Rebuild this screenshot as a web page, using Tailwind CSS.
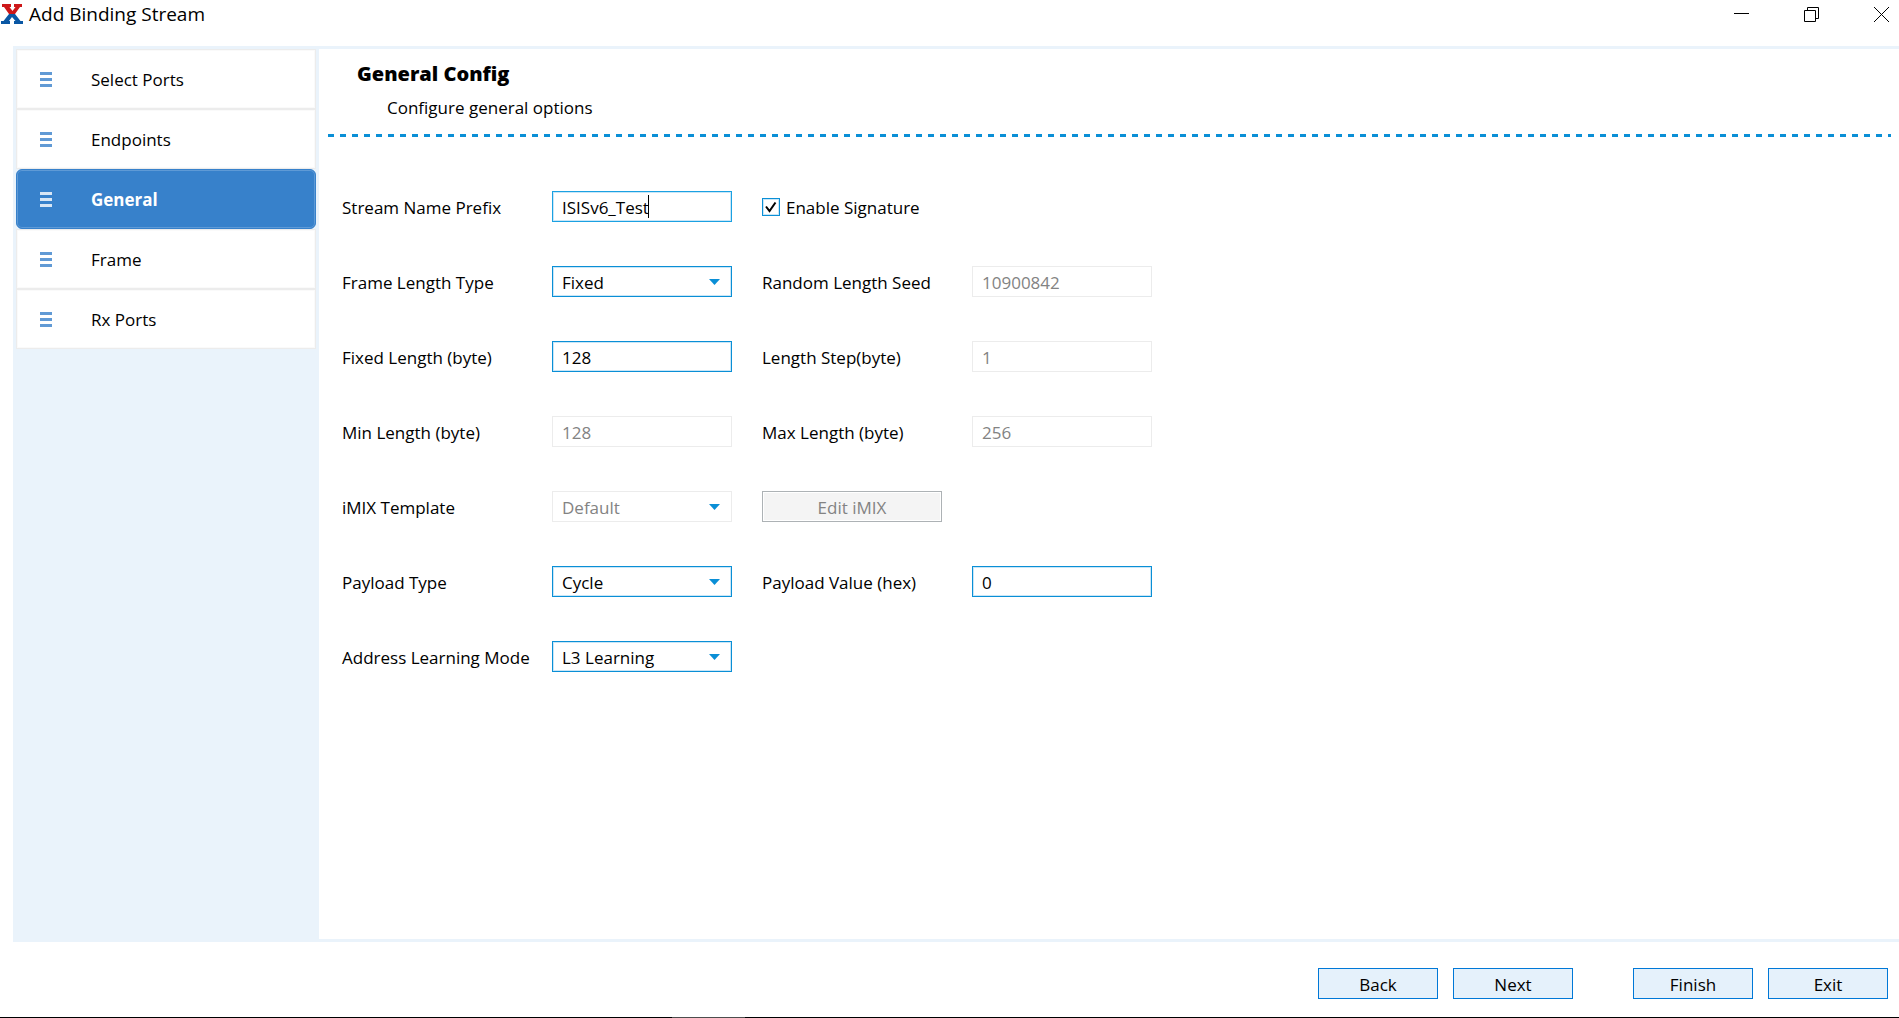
<!DOCTYPE html>
<html lang="en">
<head>
<meta charset="utf-8">
<title>Add Binding Stream</title>
<script src="https://cdn.jsdelivr.net/npm/@tailwindcss/browser@4"></script>
</head>
<body class="flex min-h-screen flex-col bg-white font-['Segoe_UI','Open_Sans',sans-serif] text-[17px] leading-6 text-black">
  <header class="flex h-[46px] items-start justify-between">
    <div class="flex h-7 items-center gap-[6px] pl-px">
      <svg class="h-5 w-[22px]" viewBox="0 0 22 20" aria-hidden="true">
        <path fill="#cd1719" d="M1 0h9v3H8.500l3 4 3-4H13V0h8v3h-2l-5 7H8L3 3H1z"/>
        <path fill="#0a57a4" d="M8 10h6l5.500 7H22v3h-9v-3h1.500l-3.500-4-3 4H9v3H0v-3h2.500z"/>
      </svg>
      <h1 class="text-[19px]">Add Binding Stream</h1>
    </div>
    <div class="flex h-7 items-center gap-[55px] pr-[10px]">
      <button type="button" aria-label="Minimize"><svg class="block size-[15px]" viewBox="0 0 15 15"><path d="M0 6.500h15" stroke="#000"/></svg></button>
      <button type="button" aria-label="Restore"><svg class="block size-[15px]" viewBox="0 0 15 15" fill="none" stroke="#000"><path d="M.5 3.500h11v11H.5zM3.500 3V.5h11v11H12"/></svg></button>
      <button type="button" aria-label="Close"><svg class="block size-[15px]" viewBox="0 0 15 15"><path d="M0 0l15 15M15 0L0 15" stroke="#000"/></svg></button>
    </div>
  </header>

  <div class="ml-[13px] flex flex-1 border-y-[3px] border-[#eaf3fb]">
    <nav class="w-[306px] shrink-0 bg-[#eaf3fb] px-[3px]" aria-label="Steps">
      <ul class="w-[300px] [&_span]:pt-[2px]">
        <li><a href="#ports" class="flex h-[60px] items-center gap-[39px] border border-[#ececec] bg-white pl-[23px] inset-ring inset-ring-[#fafafa]"><svg class="h-[15px] w-3 text-[#619ad5]" viewBox="0 0 12 15" fill="currentColor"><path d="M0 0h12v3H0zM0 6h12v3H0zM0 12h12v3H0z"/></svg><span>Select Ports</span></a></li>
        <li><a href="#endpoints" class="flex h-[60px] items-center gap-[39px] border border-[#ececec] bg-white pl-[23px] inset-ring inset-ring-[#fafafa]"><svg class="h-[15px] w-3 text-[#619ad5]" viewBox="0 0 12 15" fill="currentColor"><path d="M0 0h12v3H0zM0 6h12v3H0zM0 12h12v3H0z"/></svg><span>Endpoints</span></a></li>
        <li><a href="#general" aria-current="step" class="flex h-[60px] items-center gap-[39px] rounded-md border border-[#3781cb] bg-[#3781cb] pl-[23px] font-bold text-white inset-ring inset-ring-[#5e9ad6]"><svg class="h-[15px] w-3 text-[#d7e6f5]" viewBox="0 0 12 15" fill="currentColor"><path d="M0 0h12v3H0zM0 6h12v3H0zM0 12h12v3H0z"/></svg><span>General</span></a></li>
        <li><a href="#frame" class="flex h-[60px] items-center gap-[39px] border border-[#ececec] bg-white pl-[23px] inset-ring inset-ring-[#fafafa]"><svg class="h-[15px] w-3 text-[#619ad5]" viewBox="0 0 12 15" fill="currentColor"><path d="M0 0h12v3H0zM0 6h12v3H0zM0 12h12v3H0z"/></svg><span>Frame</span></a></li>
        <li><a href="#rx" class="flex h-[60px] items-center gap-[39px] border border-[#ececec] bg-white pl-[23px] inset-ring inset-ring-[#fafafa]"><svg class="h-[15px] w-3 text-[#619ad5]" viewBox="0 0 12 15" fill="currentColor"><path d="M0 0h12v3H0zM0 6h12v3H0zM0 12h12v3H0z"/></svg><span>Rx Ports</span></a></li>
      </ul>
    </nav>

    <main class="min-w-0 flex-1 pt-[13px] pr-2 pl-[9px]">
      <h2 class="pl-[29px] text-[20px] font-extrabold">General Config</h2>
      <p class="mt-[10px] pl-[59px]">Configure general options</p>
      <div class="mt-[14px] h-[3px] bg-[repeating-linear-gradient(90deg,#0a8fd6_0_6px,transparent_6px_12px)]"></div>

      <form class="mt-[54px] ml-[14px] grid grid-cols-[210px_180px_30px_210px_180px] items-center gap-y-11 [&_select]:pt-[2px] [&>input]:pt-[2px] [&>label]:pt-[2px]">
        <label for="prefix">Stream Name Prefix</label>
        <div class="relative">
          <input id="prefix" value="ISISv6_Test" class="h-[31px] w-full border border-[#1ba1e2] bg-white pt-[2px] pl-[9px] inset-ring inset-ring-[#c9e6f7] outline-none">
          <span class="absolute top-1 left-[96px] h-[23px] w-px bg-black"></span>
        </div>
        <div class="col-span-2 col-start-4 flex items-center gap-[6px]">
          <span class="relative size-[18px]">
            <input id="signature" type="checkbox" checked class="block size-[18px] appearance-none border border-[#0a8fd6] bg-white inset-ring inset-ring-[#c9e6f7]">
            <svg class="pointer-events-none absolute top-0 left-0 size-[18px]" viewBox="0 0 18 18" fill="none" stroke="#000" stroke-width="2"><path d="M4 8.500l3.500 4.500 6-8.500"/></svg>
          </span>
          <label for="signature" class="pt-[2px]">Enable Signature</label>
        </div>

        <label for="ltype">Frame Length Type</label>
        <div class="relative">
          <select id="ltype" class="h-[31px] w-full appearance-none border border-[#0a8fd6] bg-white pl-[9px] inset-ring inset-ring-[#c9e6f7]"><option>Fixed</option></select>
          <svg class="pointer-events-none absolute top-[13px] right-3 h-[6px] w-[11px]" viewBox="0 0 11 6"><path fill="#0a8fd6" d="M0 0h11L5.500 6z"/></svg>
        </div>
        <label for="seed" class="col-start-4">Random Length Seed</label>
        <input id="seed" disabled value="10900842" class="h-[31px] w-full border border-[#ececec] bg-white pl-[9px] text-[#838383]">

        <label for="fixed">Fixed Length (byte)</label>
        <input id="fixed" value="128" class="h-[31px] w-full border border-[#0a8fd6] bg-white pl-[9px] inset-ring inset-ring-[#c9e6f7]">
        <label for="step" class="col-start-4">Length Step(byte)</label>
        <input id="step" disabled value="1" class="h-[31px] w-full border border-[#ececec] bg-white pl-[9px] text-[#838383]">

        <label for="min">Min Length (byte)</label>
        <input id="min" disabled value="128" class="h-[31px] w-full border border-[#ececec] bg-white pl-[9px] text-[#838383]">
        <label for="max" class="col-start-4">Max Length (byte)</label>
        <input id="max" disabled value="256" class="h-[31px] w-full border border-[#ececec] bg-white pl-[9px] text-[#838383]">

        <label for="imix">iMIX Template</label>
        <div class="relative">
          <select id="imix" disabled class="h-[31px] w-full appearance-none border border-[#ececec] bg-white pl-[9px] text-[#838383] opacity-100"><option>Default</option></select>
          <svg class="pointer-events-none absolute top-[13px] right-3 h-[6px] w-[11px]" viewBox="0 0 11 6"><path fill="#0a8fd6" d="M0 0h11L5.500 6z"/></svg>
        </div>
        <button type="button" disabled class="col-start-4 h-[31px] w-[180px] border border-[#adb2b5] bg-[#f4f4f4] pt-[2px] text-[#838383] inset-ring inset-ring-white">Edit iMIX</button>

        <label for="ptype" class="col-start-1">Payload Type</label>
        <div class="relative">
          <select id="ptype" class="h-[31px] w-full appearance-none border border-[#0a8fd6] bg-white pl-[9px] inset-ring inset-ring-[#c9e6f7]"><option>Cycle</option></select>
          <svg class="pointer-events-none absolute top-[13px] right-3 h-[6px] w-[11px]" viewBox="0 0 11 6"><path fill="#0a8fd6" d="M0 0h11L5.500 6z"/></svg>
        </div>
        <label for="pvalue" class="col-start-4">Payload Value (hex)</label>
        <input id="pvalue" value="0" class="h-[31px] w-full border border-[#0a8fd6] bg-white pl-[9px] inset-ring inset-ring-[#c9e6f7]">

        <label for="learn">Address Learning Mode</label>
        <div class="relative">
          <select id="learn" class="h-[31px] w-full appearance-none border border-[#0a8fd6] bg-white pl-[9px] inset-ring inset-ring-[#c9e6f7]"><option>L3 Learning</option></select>
          <svg class="pointer-events-none absolute top-[13px] right-3 h-[6px] w-[11px]" viewBox="0 0 11 6"><path fill="#0a8fd6" d="M0 0h11L5.500 6z"/></svg>
        </div>
      </form>
    </main>
  </div>

  <footer class="flex h-[75px] items-start justify-end gap-[15px] pt-[26px] pr-[11px]">
    <button type="button" class="h-[31px] w-[120px] border border-[#0078d7] bg-[#e5f1fb] pt-[2px]">Back</button>
    <button type="button" class="h-[31px] w-[120px] border border-[#0078d7] bg-[#e5f1fb] pt-[2px]">Next</button>
    <button type="button" class="ml-[45px] h-[31px] w-[120px] border border-[#0078d7] bg-[#e5f1fb] pt-[2px]">Finish</button>
    <button type="button" class="h-[31px] w-[120px] border border-[#0078d7] bg-[#e5f1fb] pt-[2px]">Exit</button>
  </footer>
  <div class="h-px bg-black pl-[672px]"><div class="h-px w-[73px] bg-[#4d4d4d]"></div></div>
</body>
</html>
